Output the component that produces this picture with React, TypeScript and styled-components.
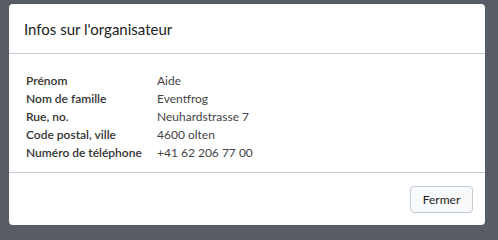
import React from 'react';
import styled, { createGlobalStyle } from 'styled-components';

const GlobalStyle = createGlobalStyle`
  html, body {
    margin: 0;
    padding: 0;
    background: #585d65;
    font-family: 'Lato', 'Noto Sans', sans-serif;
  }
`;

type RowType = {
  label: string,
  value: string,
};

const rows: RowType[] = [
  { label: 'Prénom', value: 'Aide' },
  { label: 'Nom de famille', value: 'Eventfrog' },
  { label: 'Rue, no.', value: 'Neuhardstrasse 7' },
  { label: 'Code postal, ville', value: '4600 olten' },
  { label: 'Numéro de téléphone', value: '+41 62 206 77 00' },
];

export default function App() {
  return (
    <Backdrop>
      <GlobalStyle />
      <Modal>
        <Header>
          <Title>Infos sur l'organisateur</Title>
        </Header>
        <Body>
          <InfoGrid>
            {rows.map((row) => (
              <React.Fragment key={row.label}>
                <Label>{row.label}</Label>
                <Value>{row.value}</Value>
              </React.Fragment>
            ))}
          </InfoGrid>
        </Body>
        <Footer>
          <Button>Fermer</Button>
        </Footer>
      </Modal>
    </Backdrop>
  );
}

const Backdrop = styled.div`
  width: 498px;
  height: 232px;
  padding: 4px 0 0 9px;
  box-sizing: border-box;
  background: #585d65;
  overflow: hidden;
`;

const Modal = styled.div`
  width: 476px;
  height: 221px;
  background: #ffffff;
  border-radius: 4px;
  display: flex;
  flex-direction: column;
  overflow: hidden;
`;

const Header = styled.div`
  height: 50px;
  box-sizing: border-box;
  padding: 0 15px;
  display: flex;
  align-items: center;
  border-bottom: 1px solid #c3ccd4;
`;

const Title = styled.div`
  font-size: 15px;
  color: #222222;
  margin-top: 1px;
`;

const Body = styled.div`
  height: 119px;
  box-sizing: border-box;
  padding: 17px 17px 0 17px;
  border-bottom: 1px solid #c3ccd4;
`;

const InfoGrid = styled.div`
  display: grid;
  grid-template-columns: 131px 1fr;
  grid-auto-rows: 18px;
  align-items: center;
`;

const Label = styled.div`
  font-size: 12px;
  font-weight: 600;
  color: #333333;
`;

const Value = styled.div`
  font-size: 12px;
  color: #444444;
`;

const Footer = styled.div`
  flex: 1;
  display: flex;
  align-items: center;
  justify-content: flex-end;
  padding: 0 12px;
`;

const Button = styled.button`
  width: 63px;
  height: 27px;
  border: 1px solid #c2cad2;
  border-radius: 4px;
  background: #f8f9fb;
  font-family: 'Lato', 'Noto Sans', sans-serif;
  font-size: 12px;
  color: #222222;
  padding: 0;
  cursor: pointer;
`;
